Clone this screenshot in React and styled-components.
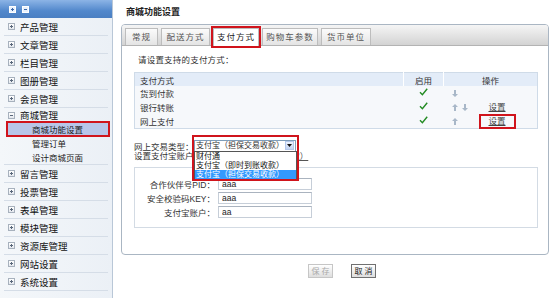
import React from "react";
import styled, { createGlobalStyle, css } from "styled-components";

const GlobalStyle = createGlobalStyle`
  html, body {
    margin: 0;
    padding: 0;
    background: #fff;
  }
  body {
    width: 550px;
    height: 298px;
    overflow: hidden;
    font-family: "Liberation Sans", "Noto Sans CJK SC", sans-serif;
    font-size: 8.5px;
    color: #333;
  }
`;

const Page = styled.div`
  display: flex;
  height: 298px;
`;

const Sidebar = styled.div`
  width: 113px;
  flex: none;
  box-sizing: border-box;
  border-right: 1px solid #b9c7d7;
  background: linear-gradient(90deg, #f4f7fa, #ebf0f6);
`;

const SideHeader = styled.div`
  height: 18px;
  display: flex;
  align-items: center;
  gap: 6px;
  padding-left: 9px;
  background: linear-gradient(#8cb4e6, #5288cc 60%, #4a7fc2);
`;

const MenuItem = styled.div`
  height: ${(p) => (p.$open ? 14 : 18)}px;
  box-sizing: border-box;
  margin: 0 4px;
  padding-left: 4px;
  display: flex;
  align-items: center;
  gap: 5px;
  font-size: 9.5px;
  color: #111;
  border-bottom: ${(p) => (p.$open ? "none" : "1px solid #d5dde7")};
`;

const Toggle = styled.span`
  width: 7px;
  height: 7px;
  flex: none;
  box-sizing: border-box;
  border: 1px solid #a7b1bd;
  background: linear-gradient(#fff, #e4e8ee);
  position: relative;
  &::before {
    content: "";
    position: absolute;
    left: 1px;
    top: 2px;
    width: 3px;
    height: 1px;
    background: #59677a;
  }
  ${(p) =>
    !p.$open &&
    css`
      &::after {
        content: "";
        position: absolute;
        left: 2px;
        top: 1px;
        width: 1px;
        height: 3px;
        background: #59677a;
      }
    `}
`;

const SubMenu = styled.div`
  margin: 0 4px;
  border-bottom: 1px solid #d5dde7;
`;

const SubItem = styled.div`
  height: 14px;
  display: flex;
  align-items: center;
  padding-left: 28px;
  font-size: 8.5px;
  color: #222;
  ${(p) =>
    p.$active &&
    css`
      padding-left: 24px;
      background: #b8c6e9;
      outline: 2px solid #d0141c;
      outline-offset: 0;
      height: 12px;
      margin: 1px 0 1px 4px;
    `}
`;

const Main = styled.div`
  flex: 1;
  padding: 0 1px 0 8px;
`;

const Title = styled.div`
  height: 24px;
  line-height: 24px;
  padding-left: 5px;
  font-size: 9px;
  font-weight: bold;
  color: #222;
`;

const Panel = styled.div`
  height: 231px;
  box-sizing: border-box;
  border: 1px solid #aab6c3;
  border-radius: 4px;
`;

const TabBar = styled.div`
  height: 21px;
  box-sizing: border-box;
  display: flex;
  align-items: flex-end;
  gap: 3px;
  padding-left: 3px;
  border-radius: 3px 3px 0 0;
  border-bottom: 1px solid #b3b3b3;
  background: linear-gradient(#f5f5f5, #d3d3d3);
`;

const Tab = styled.div`
  width: ${(p) => p.$w}px;
  height: 17px;
  box-sizing: border-box;
  border: 1px solid #bdbdbd;
  border-bottom: none;
  background: linear-gradient(#fbfbfb, #e4e4e4);
  text-align: center;
  line-height: 16px;
  letter-spacing: 1px;
  color: #555;
  ${(p) =>
    p.$active &&
    css`
      height: 18px;
      margin-bottom: -1px;
      background: #fff;
      color: #222;
      outline: 2px solid #d0141c;
      outline-offset: 0;
    `}
`;

const PanelBody = styled.div`
  padding: 7px 10px 0 12px;
`;

const Intro = styled.div`
  line-height: 14px;
  padding-left: 4px;
  margin-bottom: 5px;
  letter-spacing: 0.2px;
`;

const PayTable = styled.table`
  width: 100%;
  border-collapse: collapse;
  border: 1px solid #cfdbe8;
  background: #f6f8fb;
`;

const HeadCell = styled.th`
  height: 13px;
  padding: 0 0 0 ${(p) => (p.$left ? 5 : 0)}px;
  background: #e3ecf8;
  border-left: 1px solid #fff;
  font-weight: normal;
  text-align: ${(p) => (p.$left ? "left" : "center")};
  color: #333;
  &:first-child {
    border-left: none;
  }
`;

const Cell = styled.td`
  height: 14px;
  padding: 0 0 0 ${(p) => p.$pad || 0}px;
  text-align: ${(p) => p.$align || "left"};
  vertical-align: middle;
`;

const OpBox = styled.div`
  display: flex;
  align-items: center;
`;

const Arrows = styled.span`
  display: inline-flex;
  gap: 4px;
  width: 22px;
  padding-left: 8px;
`;

const SetLink = styled.a`
  display: inline-block;
  width: 33px;
  margin-left: 7px;
  line-height: 11px;
  text-align: center;
  color: #444;
  text-decoration: underline;
  ${(p) =>
    p.$marked &&
    css`
      outline: 2px solid #d0141c;
      outline-offset: 0;
    `}
`;

const TypeRow = styled.div`
  margin-top: 10px;
  height: 13px;
  display: flex;
  align-items: center;
`;

const TypeLabel = styled.span`
  width: 60px;
  flex: none;
`;

const SelectWrap = styled.div`
  position: relative;
  width: 102px;
  height: 12px;
`;

const SelectBox = styled.div`
  height: 12px;
  box-sizing: border-box;
  border: 1px solid #7f9db9;
  display: flex;
  align-items: center;
  background: #fff;
`;

const SelectText = styled.span`
  flex: 1;
  padding-left: 1px;
  font-size: 8px;
  line-height: 10px;
  white-space: nowrap;
  overflow: hidden;
`;

const SelectArrow = styled.span`
  width: 9px;
  height: 9px;
  margin-right: 1px;
  box-sizing: border-box;
  border: 1px solid #b4c8ec;
  background: linear-gradient(#eef3fd, #c3d4f4);
  display: flex;
  align-items: center;
  justify-content: center;
`;

const Dropdown = styled.div`
  position: absolute;
  top: 11px;
  left: 0;
  width: 103px;
  box-sizing: border-box;
  border: 1px solid #555;
  background: #fff;
  z-index: 2;
`;

const Option = styled.div`
  height: 9px;
  line-height: 9px;
  padding-left: 1px;
  font-size: 8px;
  white-space: nowrap;
  color: ${(p) => (p.$selected ? "#fff" : "#111")};
  background: ${(p) => (p.$selected ? "#3399ff" : "#fff")};
`;

const RedMark = styled.div`
  position: absolute;
  top: -5px;
  left: -2px;
  width: 107px;
  height: 46px;
  box-sizing: border-box;
  border: 2px solid #d0141c;
  pointer-events: none;
  z-index: 3;
`;

const AccountLine = styled.div`
  margin-top: -1px;
  line-height: 11px;
  white-space: nowrap;
`;

const AccountLink = styled.a`
  color: #555;
  text-decoration: underline;
`;

const FieldBox = styled.div`
  margin-top: 5px;
  height: 61px;
  box-sizing: border-box;
  border: 1px solid #d3dbe4;
  padding-top: 10px;
  display: flex;
  flex-direction: column;
  gap: 2px;
`;

const FieldRow = styled.div`
  display: flex;
  align-items: center;
  height: 12px;
`;

const FieldLabel = styled.label`
  width: 80px;
  text-align: right;
  white-space: nowrap;
`;

const FieldInput = styled.input`
  width: 94px;
  height: 12px;
  box-sizing: border-box;
  margin: 0 0 0 3px;
  padding: 0 3px;
  border: 1px solid #c6ced8;
  border-top-color: #aab3bf;
  font-family: "Liberation Sans", sans-serif;
  font-size: 8.5px;
  color: #222;
  outline: none;
`;

const ButtonBar = styled.div`
  display: flex;
  justify-content: center;
  gap: 18px;
  padding: 9px 0 0 14px;
`;

const Btn = styled.button`
  width: 25px;
  height: 14px;
  padding: 0;
  box-sizing: border-box;
  font-family: "Noto Sans CJK SC", sans-serif;
  font-size: 8px;
  line-height: 12px;
  border: 1px solid ${(p) => (p.disabled ? "#c6c6c6" : "#707070")};
  background: linear-gradient(#ffffff, #dedede);
  color: ${(p) => (p.disabled ? "#a9a9a9" : "#222")};
`;

const HeadIcon = ({ minus }) => (
  <svg width="7" height="7" viewBox="0 0 7 7">
    <rect x="0.5" y="0.5" width="6" height="6" fill="#e9f1fc" stroke="#ffffff" />
    <rect x="2" y="3" width="3" height="1" fill="#3a66a8" />
    {!minus && <rect x="3" y="2" width="1" height="3" fill="#3a66a8" />}
  </svg>
);

const Check = () => (
  <svg width="9" height="8" viewBox="0 0 9 8">
    <path d="M1 4.2 L3.4 6.8 L8.2 0.8" fill="none" stroke="#238b23" strokeWidth="1.4" />
  </svg>
);

const Arrow = ({ down }) => (
  <svg width="6" height="7" viewBox="0 0 6 7">
    <path
      d={down ? "M3 7 L0 4 H2 V0 H4 V4 H6 Z" : "M3 0 L6 3 H4 V7 H2 V3 H0 Z"}
      fill="#a8b7c8"
    />
  </svg>
);

const menuTop = ["产品管理", "文章管理", "栏目管理", "图册管理", "会员管理"];
const menuBottom = ["留言管理", "投票管理", "表单管理", "模块管理", "资源库管理", "网站设置", "系统设置"];
const tabs = [
  { label: "常规", w: 33 },
  { label: "配送方式", w: 49 },
  { label: "支付方式", w: 46, active: true },
  { label: "购物车参数", w: 56 },
  { label: "货币单位", w: 50 },
];
const payRows = [
  { name: "货到付款", arrows: ["down"], link: false },
  { name: "银行转账", arrows: ["up", "down"], link: true },
  { name: "网上支付", arrows: ["up"], link: true, marked: true },
];
const fields = [
  { label: "合作伙伴号PID：", value: "aaa" },
  { label: "安全校验码KEY：", value: "aaa" },
  { label: "支付宝账户：", value: "aa" },
];

const App = () => {
  return (
    <Page>
      <GlobalStyle />
      <Sidebar>
        <SideHeader>
          <HeadIcon />
          <HeadIcon minus />
        </SideHeader>
        {menuTop.map((m) => (
          <MenuItem key={m}>
            <Toggle />
            {m}
          </MenuItem>
        ))}
        <MenuItem $open>
          <Toggle $open />
          商城管理
        </MenuItem>
        <SubMenu>
          <SubItem $active>商城功能设置</SubItem>
          <SubItem>管理订单</SubItem>
          <SubItem>设计商城页面</SubItem>
        </SubMenu>
        {menuBottom.map((m) => (
          <MenuItem key={m}>
            <Toggle />
            {m}
          </MenuItem>
        ))}
      </Sidebar>

      <Main>
        <Title>商城功能设置</Title>
        <Panel>
          <TabBar>
            {tabs.map((t) => (
              <Tab key={t.label} $w={t.w} $active={t.active}>
                {t.label}
              </Tab>
            ))}
          </TabBar>
          <PanelBody>
            <Intro>请设置支持的支付方式：</Intro>
            <PayTable>
              <colgroup>
                <col style={{ width: 269 }} />
                <col style={{ width: 40 }} />
                <col />
              </colgroup>
              <thead>
                <tr>
                  <HeadCell $left>支付方式</HeadCell>
                  <HeadCell>启用</HeadCell>
                  <HeadCell>操作</HeadCell>
                </tr>
              </thead>
              <tbody>
                {payRows.map((r) => (
                  <tr key={r.name}>
                    <Cell $pad={5}>{r.name}</Cell>
                    <Cell $align="center">
                      <Check />
                    </Cell>
                    <Cell>
                      <OpBox>
                        <Arrows>
                          {r.arrows.map((a) => (
                            <Arrow key={a} down={a === "down"} />
                          ))}
                        </Arrows>
                        {r.link && <SetLink $marked={r.marked}>设置</SetLink>}
                      </OpBox>
                    </Cell>
                  </tr>
                ))}
              </tbody>
            </PayTable>

            <TypeRow>
              <TypeLabel>网上交易类型：</TypeLabel>
              <SelectWrap>
                <SelectBox>
                  <SelectText>支付宝（担保交易收款）</SelectText>
                  <SelectArrow>
                    <svg width="5" height="3" viewBox="0 0 5 3">
                      <path d="M0 0 H5 L2.5 3 Z" fill="#111" />
                    </svg>
                  </SelectArrow>
                </SelectBox>
                <Dropdown>
                  <Option>财付通</Option>
                  <Option>支付宝（即时到账收款）</Option>
                  <Option $selected>支付宝（担保交易收款）</Option>
                </Dropdown>
                <RedMark />
              </SelectWrap>
            </TypeRow>
            <AccountLine>
              设置支付宝账户：<AccountLink>（申请支付宝担保交易收款）</AccountLink>
            </AccountLine>

            <FieldBox>
              {fields.map((f) => (
                <FieldRow key={f.label}>
                  <FieldLabel>{f.label}</FieldLabel>
                  <FieldInput value={f.value} readOnly />
                </FieldRow>
              ))}
            </FieldBox>
          </PanelBody>
        </Panel>
        <ButtonBar>
          <Btn disabled>保 存</Btn>
          <Btn>取 消</Btn>
        </ButtonBar>
      </Main>
    </Page>
  );
};

export default App;
